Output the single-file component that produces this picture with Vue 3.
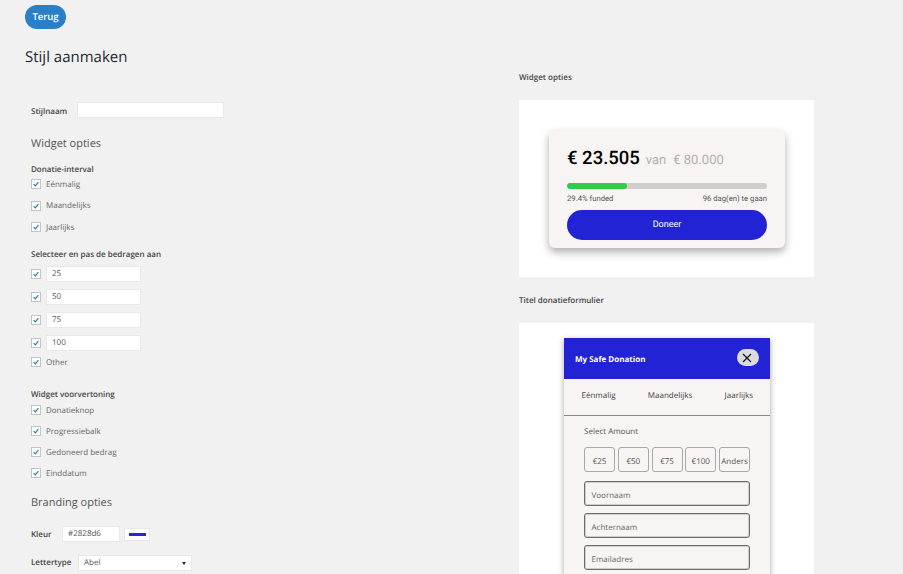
<script setup>
const intervals = ['Eénmalig', 'Maandelijks', 'Jaarlijks']
const amounts = ['25', '50', '75', '100']
const preview = ['Donatieknop', 'Progressiebalk', 'Gedoneerd bedrag', 'Einddatum']
const presets = ['€25', '€50', '€75', '€100', 'Anders']
const fields = ['Voornaam', 'Achternaam', 'Emailadres']
</script>

<template>
  <div class="page">
    <section class="left">
      <button class="back">Terug</button>
      <h1 class="title">Stijl aanmaken</h1>
      <form class="form">
        <div class="row name-row">
          <label class="strong name-label">Stijlnaam</label>
          <div class="text-input name-input"></div>
        </div>
        <h2 class="section">Widget opties</h2>
        <h3 class="strong group">Donatie-interval</h3>
        <div class="checks">
          <div v-for="item in intervals" :key="item" class="check-row">
            <span class="box"><svg viewBox="0 0 10 10"><path d="M2 5.2 4.2 7.4 8 2.6" /></svg></span>
            <span>{{ item }}</span>
          </div>
        </div>
        <h3 class="strong group amounts-title">Selecteer en pas de bedragen aan</h3>
        <div class="amounts">
          <div v-for="item in amounts" :key="item" class="amount-row">
            <span class="box"><svg viewBox="0 0 10 10"><path d="M2 5.2 4.2 7.4 8 2.6" /></svg></span>
            <div class="text-input amount-input">{{ item }}</div>
          </div>
          <div class="check-row other">
            <span class="box"><svg viewBox="0 0 10 10"><path d="M2 5.2 4.2 7.4 8 2.6" /></svg></span>
            <span>Other</span>
          </div>
        </div>
        <h3 class="strong group preview-title">Widget voorvertoning</h3>
        <div class="checks preview-checks">
          <div v-for="item in preview" :key="item" class="check-row">
            <span class="box"><svg viewBox="0 0 10 10"><path d="M2 5.2 4.2 7.4 8 2.6" /></svg></span>
            <span>{{ item }}</span>
          </div>
        </div>
        <h2 class="section branding">Branding opties</h2>
        <div class="row color-row">
          <label class="strong color-label">Kleur</label>
          <div class="text-input color-input">#2828d6</div>
          <div class="swatch"><i></i></div>
        </div>
        <div class="row font-row">
          <label class="strong font-label">Lettertype</label>
          <div class="text-input font-select"><span>Abel</span><b></b></div>
        </div>
      </form>
    </section>

    <section class="right">
      <h3 class="strong panel-title first">Widget opties</h3>
      <div class="panel widget-panel">
        <div class="card">
          <div class="goal"><strong>€ 23.505</strong><span>van</span><span>€ 80.000</span></div>
          <div class="bar"><i></i></div>
          <div class="bar-labels"><span>29.4% funded</span><span>96 dag(en) te gaan</span></div>
          <div class="donate">Doneer</div>
        </div>
      </div>
      <h3 class="strong panel-title second">Titel donatieformulier</h3>
      <div class="panel form-panel">
        <div class="modal">
          <header class="modal-head">
            <span class="modal-title">My Safe Donation</span>
            <div class="close"><svg viewBox="0 0 10 10"><path d="M1 1 9 9M9 1 1 9" /></svg></div>
          </header>
          <nav class="tabs">
            <span>Eénmalig</span><span>Maandelijks</span><span>Jaarlijks</span>
          </nav>
          <div class="modal-body">
            <div class="select-label">Select Amount</div>
            <div class="presets">
              <div v-for="p in presets" :key="p" class="preset">{{ p }}</div>
            </div>
            <div v-for="f in fields" :key="f" class="field">{{ f }}</div>
          </div>
        </div>
      </div>
    </section>
  </div>
</template>

<style>
html, body { margin: 0; background: #f1f1f1; overflow: hidden; }
</style>

<style scoped>
* { box-sizing: border-box; }
.page {
  width: 903px; height: 574px; overflow: hidden; background: #f1f1f1;
  display: grid; grid-template-columns: 519px 295px;
  font-family: "Open Sans", "Noto Sans", sans-serif; color: #555;
  text-rendering: geometricPrecision;
}
h1, h2, h3 { margin: 0; }
.left { padding: 5px 0 0 25px; }
.back {
  display: block; width: 41px; height: 24px; padding: 0; border: 0; border-radius: 12px;
  background: #2a7fc5; color: #fff; font: 600 9.5px/24px "Open Sans", sans-serif; text-rendering: geometricPrecision;
}
.title { margin-top: 18px; font-size: 15px; line-height: 20px; font-weight: 500; color: #23282d; }
.form { padding: 35px 0 0 6px; font-size: 8px; }
.strong { font-size: 8px; line-height: 12px; font-weight: 600; color: #444; }
.row { display: flex; align-items: center; }
.name-row { height: 16px; }
.name-label { width: 46px; padding-top: 3px; }
.text-input {
  background: #fff; border: 1px solid #e8e8e8; height: 16px; color: #555;
  font-size: 8px; line-height: 14px; padding-left: 5px;
}
.name-input { width: 147px; }
.section { font-size: 11px; line-height: 16px; font-weight: 400; color: #555; margin-top: 18px; }
.group { margin-top: 12px; }
.checks { margin-top: 2px; display: flex; flex-direction: column; gap: 9.5px; }
.check-row { display: flex; align-items: center; gap: 5px; height: 12px; color: #666; font-size: 8px; }
.box {
  flex: none; width: 10px; height: 10px; background: #fff; border: 1px solid #c4c4c4; display: block;
}
.box svg { display: block; width: 8px; height: 8px; }
.box path { fill: none; stroke: #2a7fa8; stroke-width: 1.5; }
.amounts-title { margin-top: 16px; }
.amounts { margin-top: 5px; display: flex; flex-direction: column; gap: 7px; }
.amount-row { display: flex; align-items: center; gap: 5px; }
.amount-input { width: 95px; }
.other { margin-top: -2px; }
.preview-title { margin-top: 21px; }
.preview-checks { margin-top: 3px; gap: 9px; }
.branding { margin-top: 16px; }
.color-row { margin-top: 15px; height: 16px; }
.color-label { width: 31px; padding-top: 2px; }
.color-input { width: 58px; }
.swatch {
  width: 26px; height: 13px; margin-left: 4px; background: #fff; border: 1px solid #e8e8e8;
  display: flex; align-items: center; justify-content: center;
}
.swatch i { display: block; width: 17px; height: 3px; background: #2828d6; }
.font-row { margin-top: 13px; height: 16px; }
.font-label { width: 47px; }
.font-select { width: 114px; display: flex; align-items: center; justify-content: space-between; padding: 0 5px; }
.font-select b { width: 0; height: 0; border: 2.5px solid transparent; border-top: 3.5px solid #222; border-bottom: 0; }

.panel-title { height: 12px; line-height: 14px; }
.first { margin-top: 71px; }
.second { margin-top: 17px; }
.panel { background: #fff; margin-top: 17px; }
.widget-panel { height: 177px; padding: 30px; }
.card {
  width: 236px; height: 118px; background: #f7f4f3; border-radius: 6px; padding: 17px 18px 0;
  box-shadow: 0 4px 9px rgba(0,0,0,.32); font-family: Roboto, sans-serif;
}
.goal { display: flex; align-items: baseline; gap: 6px; height: 23px; color: #b3b0af; font-size: 13px; line-height: 23px; white-space: nowrap; }
.goal strong { color: #000; font-size: 18.5px; font-weight: 500; }
.goal span:last-child { margin-left: 1px; }
.bar { margin-top: 13px; height: 6px; border-radius: 3px; background: #d0cecd; overflow: hidden; }
.bar i { display: block; height: 100%; width: 60px; background: #2ecc4a; border-radius: 3px; }
.bar-labels { display: flex; justify-content: space-between; margin-top: 4px; font-size: 7.7px; line-height: 12px; color: #555; }
.donate {
  margin-top: 5px; height: 30px; border-radius: 15px; background: #2323d6; color: #fff;
  font-size: 9px; line-height: 31px; text-align: center;
}
.form-panel { height: 260px; padding: 15px 0 0 44.5px; }
.modal { width: 206.5px; height: 245px; background: #f7f4f3; box-shadow: 0 2px 6px rgba(0,0,0,.35); }
.modal-head {
  height: 41px; background: #2323d6; color: #fff; font-size: 8px; font-weight: 700;
  display: flex; align-items: center; justify-content: space-between; padding: 0 11.5px;
}
.modal-title { padding-top: 2px; }
.close {
  width: 22px; height: 17px; border-radius: 9px; background: #dcdcdc; margin-top: -2px; padding-right: 1px;
  display: flex; align-items: center; justify-content: center;
}
.close svg { width: 10px; height: 10px; }
.close path { stroke: #111; stroke-width: 1.2; fill: none; }
.tabs {
  height: 37px; border-bottom: 1px solid #8a8786; padding: 0 17px 3px 18px;
  display: flex; align-items: center; justify-content: space-between;
  font-size: 8px; color: #444;
}
.modal-body { padding: 9px 20px 0 20.5px; }
.select-label { font-size: 8px; line-height: 14px; color: #555; }
.presets { display: flex; justify-content: space-between; margin-top: 7.5px; margin-bottom: 9px; }
.preset {
  width: 31px; height: 25px; border: 1px solid #aaa8a7; border-radius: 3px;
  font-size: 8px; line-height: 27px; text-align: center; color: #555;
}
.field {
  height: 25.5px; border: 1px solid #6e6b6a; border-radius: 3px; margin-bottom: 6.5px;
  box-shadow: inset 0 0 0 1px rgba(120,120,120,.3);
  padding-left: 6.5px; font-size: 8px; line-height: 27px; color: #666;
}
</style>
